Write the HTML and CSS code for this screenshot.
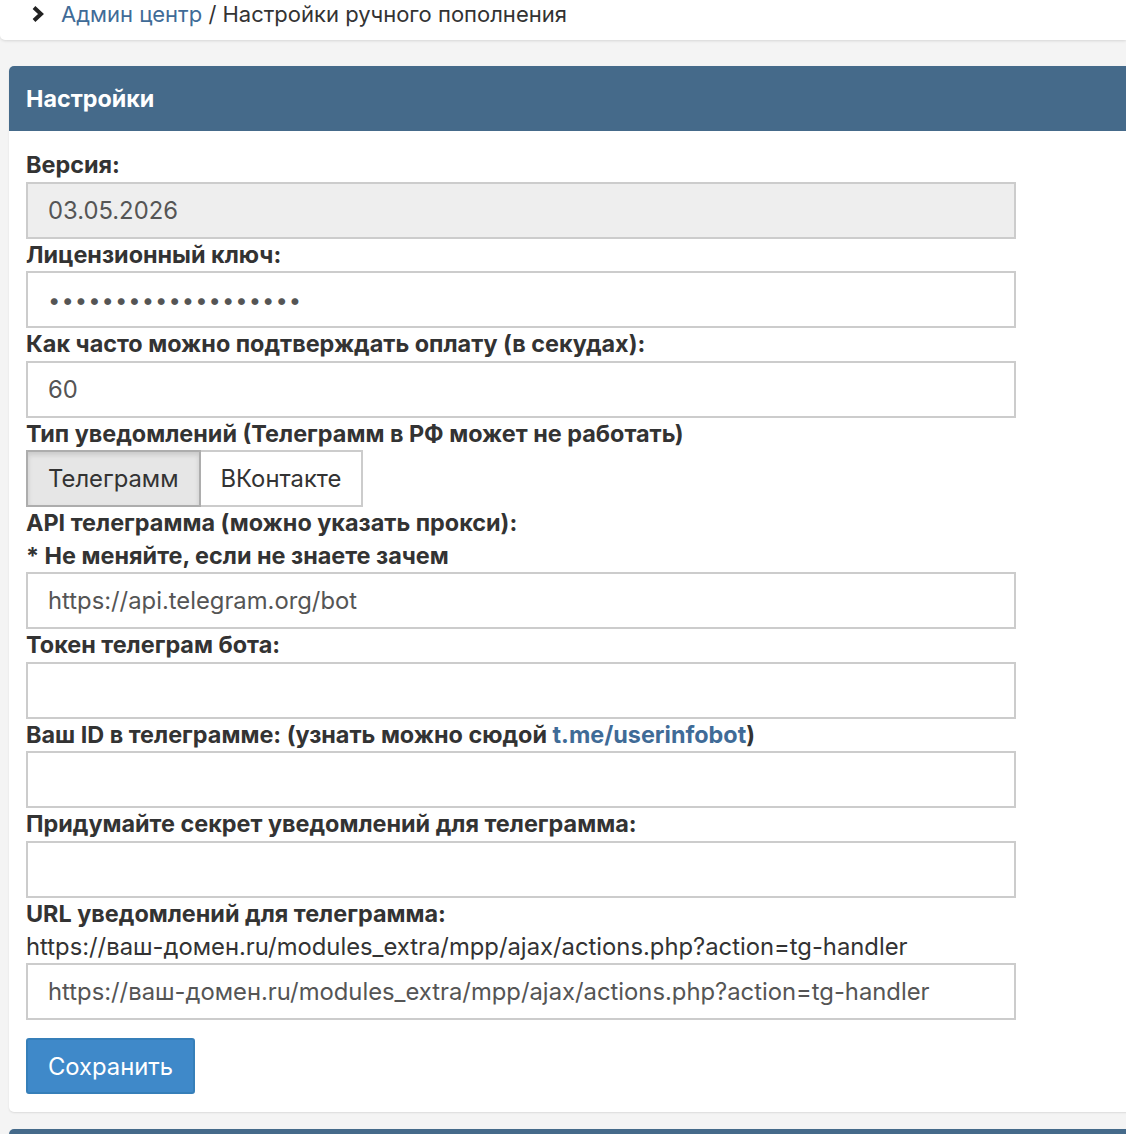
FILE: index.html
```html
<!DOCTYPE html>
<html lang="ru">
<head>
<meta charset="utf-8">
<title>Настройки ручного пополнения</title>
<link rel="stylesheet" href="styles.css">
</head>
<body>
<div class="topbar">
  <nav class="crumbs">
    <svg class="chev" viewBox="0 0 16 18" width="16" height="18"><path d="M4 2.5 L11 9 L4 15.5" fill="none" stroke="#222" stroke-width="4" stroke-linejoin="miter"/></svg>
    <a class="crumb-link" href="#">Админ центр</a><span class="sep"> / </span><span>Настройки ручного пополнения</span>
  </nav>
</div>
<main class="page">
  <section class="card">
    <header class="card-head">Настройки</header>
    <form class="card-body">
      <label class="lbl">Версия:</label>
      <input class="field" type="text" value="03.05.2026" disabled>
      <label class="lbl">Лицензионный ключ:</label>
      <input class="field pwd" type="password" value="xxxxxxxxxxxxxxxxxxx">
      <label class="lbl">Как часто можно подтверждать оплату (в секудах):</label>
      <input class="field" type="text" value="60">
      <label class="lbl">Тип уведомлений (Телеграмм в РФ может не работать)</label>
      <div class="btn-group">
        <button type="button" class="seg active">Телеграмм</button><button type="button" class="seg">ВКонтакте</button>
      </div>
      <label class="lbl">API телеграмма (можно указать прокси):<br>* Не меняйте, если не знаете зачем</label>
      <input class="field" type="text" value="https://api.telegram.org/bot">
      <label class="lbl">Токен телеграм бота:</label>
      <input class="field" type="text" value="">
      <label class="lbl">Ваш ID в телеграмме: (узнать можно сюдой <a class="lnk" href="#">t.me/userinfobot</a>)</label>
      <input class="field" type="text" value="">
      <label class="lbl">Придумайте секрет уведомлений для телеграмма:</label>
      <input class="field" type="text" value="">
      <label class="lbl">URL уведомлений для телеграмма:</label>
      <div class="plain">https://ваш-домен.ru/modules_extra/mpp/ajax/actions.php?action=tg-handler</div>
      <input class="field" type="text" value="https://ваш-домен.ru/modules_extra/mpp/ajax/actions.php?action=tg-handler">
      <div class="actions"><button type="button" class="btn-primary">Сохранить</button></div>
    </form>
  </section>
  <section class="card next">
    <header class="card-head"></header>
  </section>
</main>
</body>
</html>
```
FILE: styles.css
```css
html, body {
  margin: 0;
  padding: 0;
  background: #f4f4f4;
  overflow: hidden;
  font-family: Inter, "Noto Sans", sans-serif;
  color: #333;
}
.topbar {
  height: 40px;
  background: #fff;
  border-bottom-left-radius: 5px;
  box-shadow: 0 1px 3px rgba(0,0,0,0.12);
  display: flex;
  align-items: flex-start;
}
.crumbs {
  display: flex;
  align-items: center;
  padding-left: 30px;
  font-size: 22px;
  line-height: 28px;
  color: #333;
  white-space: nowrap;
}
.chev { margin-right: 15px; }
.crumb-link { color: #3f6b97; text-decoration: none; }
.sep { white-space: pre; }
.page {
  padding: 26px 0 0 9px;
}
.card {
  width: 1140px;
  background: #fff;
  border-radius: 5px;
  box-shadow: 0 1px 2px rgba(0,0,0,0.1);
}
.card-head {
  height: 65px;
  background: #456a8a;
  color: #fff;
  font-weight: 700;
  font-size: 23.3px;
  line-height: 65px;
  padding-left: 17px;
  border-radius: 5px 5px 0 0;
}
.card-body {
  padding: 18px 17px 18px 17px;
  display: flex;
  flex-direction: column;
  align-items: flex-start;
}
.lbl {
  font-weight: 700;
  font-size: 23.4px;
  line-height: 32.5px;
  color: #333;
  white-space: nowrap;
}
.lnk { color: #3f6b97; text-decoration: none; }
.plain {
  font-size: 23.8px;
  line-height: 33px;
  color: #333;
  white-space: nowrap;
}
.field {
  box-sizing: border-box;
  width: 990px;
  height: 57px;
  border: 2px solid #ccc;
  padding: 0 20px;
  font-family: inherit;
  font-size: 23.8px;
  color: #555;
  background: #fff;
  outline: none;
  margin: 0;
}
.field.pwd { font-size: 22px; letter-spacing: 1px; }
.field:disabled { background: #eee; color: #555; -webkit-text-fill-color: #555; }
.btn-group { display: flex; }
.seg {
  box-sizing: border-box;
  height: 57px;
  padding: 0 20px;
  font-family: inherit;
  font-size: 23.8px;
  color: #333;
  background: #fff;
  border: 2px solid #ccc;
  margin: 0;
}
.seg + .seg { border-left: none; }
.seg.active {
  background: #e6e6e6;
  border-color: #adadad;
  box-shadow: inset 0 3px 5px rgba(0,0,0,0.125);
}
.actions { margin-top: 18px; }
.btn-primary {
  box-sizing: border-box;
  width: 169px;
  height: 56px;
  background: #3f89c9;
  border: 2px solid #367fb9;
  border-radius: 3px;
  color: #fff;
  font-family: inherit;
  font-size: 23.8px;
  padding: 0;
}
.card.next { margin-top: 17px; }
```
